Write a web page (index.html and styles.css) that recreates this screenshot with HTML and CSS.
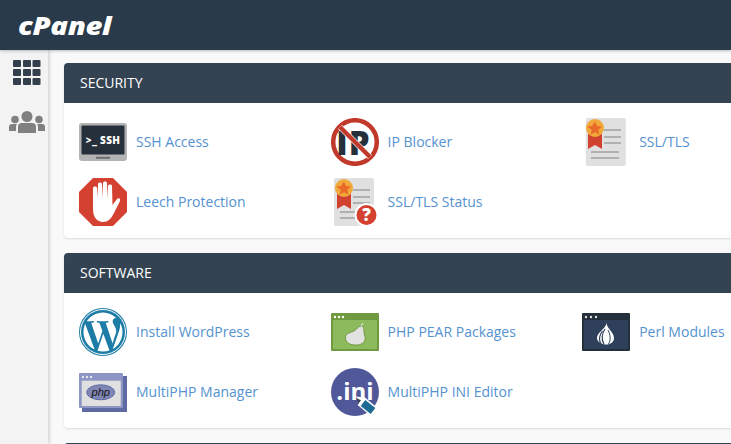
FILE: index.html
```html
<!DOCTYPE html>
<html lang="en">
<head>
    <meta charset="UTF-8">
    <title>cPanel</title>
    <link rel="stylesheet" href="styles.css">
</head>
<body>
    <header class="topbar">
        <span class="logo">cPanel</span>
    </header>
    <div class="layout">
        <nav class="sidebar">
            <a class="side-link" href="#">
                <svg width="28" height="26" viewBox="0 0 28 26" fill="#333f4c">
                    <rect x="0" y="0" width="8" height="7" rx="1"/><rect x="10" y="0" width="8" height="7" rx="1"/><rect x="19.500" y="0" width="8" height="7" rx="1"/>
                    <rect x="0" y="9" width="8" height="7" rx="1"/><rect x="10" y="9" width="8" height="7" rx="1"/><rect x="19.500" y="9" width="8" height="7" rx="1"/>
                    <rect x="0" y="18" width="8" height="7" rx="1"/><rect x="10" y="18" width="8" height="7" rx="1"/><rect x="19.500" y="18" width="8" height="7" rx="1"/>
                </svg>
            </a>
            <a class="side-link" href="#">
                <svg width="36" height="22" viewBox="0 0 36 22" fill="#808080">
                    <circle cx="18" cy="5.500" r="5.500"/>
                    <circle cx="6" cy="8.500" r="3.800"/>
                    <circle cx="30" cy="8.500" r="3.800"/>
                    <path d="M9 22v-6q0-4 4-4h10q4 0 4 4v6z"/>
                    <path d="M0 20v-4q0-3 3-3h5q-1 1-1 3v4z"/>
                    <path d="M36 20v-4q0-3-3-3h-5q1 1 1 3v4z"/>
                </svg>
            </a>
        </nav>
        <main class="content">
            <section class="panel">
                <h2 class="panel-head">SECURITY</h2>
                <div class="panel-body">
                    <a class="item" href="#">
                        <svg class="icon" viewBox="0 0 48 48">
                            <rect x="0" y="5" width="48" height="38" rx="3" fill="#b3b3b3"/>
                            <rect x="2.500" y="7.500" width="43" height="29" rx="1" fill="#25303b"/>
                            <rect x="17" y="38.800" width="14" height="2" fill="#6e6e6e"/>
                            <text x="24" y="26" class="ssh-text">&gt;_ SSH</text>
                        </svg>
                        <span>SSH Access</span>
                    </a>
                    <a class="item" href="#">
                        <svg class="icon" viewBox="0 0 48 48">
                            <circle cx="24" cy="24" r="21.800" fill="#fff" stroke="#c0392b" stroke-width="4.500"/>
                            <text x="22.500" y="37" class="ip-text">IP</text>
                            <path d="M9 9L39 39" stroke="#fff" stroke-width="5.500"/>
                            <path d="M9 9L39 39" stroke="#c0392b" stroke-width="4.500"/>
                        </svg>
                        <span>IP Blocker</span>
                    </a>
                    <a class="item" href="#">
                        <svg class="icon" viewBox="0 0 48 48">
                            <rect x="3.800" y="0" width="40" height="48" rx="2" fill="#e0e0e0"/>
                            <g fill="#b0b0b0">
                                <rect x="22" y="11" width="17" height="2"/><rect x="22" y="18" width="17" height="2"/><rect x="22" y="24" width="17" height="2"/>
                                <rect x="9" y="33" width="28" height="2"/><rect x="9" y="39" width="28" height="2"/>
                            </g>
                            <path d="M6 16H20V31L13 27L6 31z" fill="#d0412f"/>
                            <circle cx="13" cy="10" r="9" fill="#f2a93b"/>
                            <path d="M13 3.500l2 4.500 5 .5-3.700 3.300 1 4.900-4.300-2.500-4.300 2.500 1-4.900L5 8.500l5-.5z" fill="#ea6a2a"/>
                        </svg>
                        <span>SSL/TLS</span>
                    </a>
                    <a class="item" href="#">
                        <svg class="icon" viewBox="0 0 48 48">
                            <path d="M14 0H34L48 14V34L34 48H14L0 34V14z" fill="#d44130"/>
                            <path d="M14 31C14 26 14 14 14 10C14 8 18 8 18 10L18.500 20L19 6C19 4 23 4 23 6L23.500 20L24 5C24 3 28 3 28 5L28.500 21L29 8C29 6 33 6 33 8L33.500 27L38 21C40 19 42 21 41 23L35 35C32 41 29 44 24 44C18 44 14 39 14 31z" fill="#fff"/>
                        </svg>
                        <span>Leech Protection</span>
                    </a>
                    <a class="item" href="#">
                        <svg class="icon" viewBox="0 0 48 48">
                            <rect x="3" y="0" width="40" height="48" rx="2" fill="#e0e0e0"/>
                            <g fill="#b0b0b0">
                                <rect x="22" y="11" width="17" height="2"/><rect x="22" y="18" width="17" height="2"/><rect x="22" y="24" width="17" height="2"/>
                                <rect x="9" y="33" width="20" height="2"/><rect x="9" y="39" width="20" height="2"/>
                            </g>
                            <path d="M6 16H20V31L13 27L6 31z" fill="#d0412f"/>
                            <circle cx="13" cy="10" r="9" fill="#f2a93b"/>
                            <path d="M13 3.500l2 4.500 5 .5-3.700 3.300 1 4.900-4.300-2.500-4.300 2.500 1-4.900L5 8.500l5-.5z" fill="#ea6a2a"/>
                            <circle cx="35.500" cy="37" r="11" fill="#d44130" stroke="#fff" stroke-width="2"/>
                            <text x="35.500" y="43" class="q-text">?</text>
                        </svg>
                        <span>SSL/TLS Status</span>
                    </a>
                </div>
            </section>
            <section class="panel">
                <h2 class="panel-head">SOFTWARE</h2>
                <div class="panel-body">
                    <a class="item" href="#">
                        <svg class="icon" viewBox="0 0 48 48">
                            <circle cx="24" cy="24" r="24" fill="#1d7ca6"/>
                            <circle cx="24" cy="24" r="22.500" fill="none" stroke="#fff" stroke-width="1"/>
                            <path d="M4.500 24C4.500 31.800 9 38.500 15.600 41.600L6.200 16C5.100 18.400 4.500 21.100 4.500 24z" fill="#fff"/>
                            <path d="M37.200 23.200C37.200 20.800 36.300 19.100 35.600 17.900C34.600 16.300 33.700 15 33.700 13.400C33.700 11.600 35 10 36.900 10H37.200C33.700 6.800 29.100 4.500 24 4.500C17.200 4.500 11.200 8 7.700 13.300H9C11 13.300 14.200 13 14.200 13C15.300 13 15.400 14.500 14.400 14.600C14.400 14.600 13.400 14.700 12.200 14.800L19.200 35.500L23.400 22.900L20.400 14.800C19.400 14.700 18.400 14.600 18.400 14.600C17.400 14.500 17.500 13 18.500 13C18.500 13 21.700 13.300 23.600 13.300C25.600 13.300 28.800 13 28.800 13C29.800 13 29.900 14.500 28.900 14.600C28.900 14.600 27.900 14.700 26.700 14.800L33.600 35.400L35.500 29C36.500 26.600 37.200 24.800 37.200 23.200z" fill="#fff"/>
                            <path d="M24.300 25.800L18.500 42.700C20.200 43.200 22.100 43.500 24 43.500C26.300 43.500 28.400 43.100 30.400 42.400L30.300 42.100z" fill="#fff"/>
                            <path d="M41 15.100C41.100 15.700 41.100 16.400 41.100 17.100C41.100 19.100 40.700 21.300 39.700 24.100L33.800 41.100C39.600 37.800 43.500 31.300 43.500 24C43.500 20.800 42.500 17.700 41 15.100z" fill="#fff"/>
                        </svg>
                        <span>Install WordPress</span>
                    </a>
                    <a class="item" href="#">
                        <svg class="icon" viewBox="0 0 48 48">
                            <rect x="0" y="5" width="48" height="38" rx="1" fill="#6f9a3f"/>
                            <rect x="2" y="12" width="44" height="29" fill="#8dba5c"/>
                            <circle cx="4" cy="9" r="1.200" fill="#fff"/><circle cx="8" cy="9" r="1.200" fill="#fff"/><circle cx="12" cy="9" r="1.200" fill="#fff"/>
                            <path d="M30 18C33 18 33 21 33 24C33 27 35 29 34 32C32.500 36 28 37.500 23 37C17 36.500 14 33 14.500 29C15 25 20 24.500 23 23C26 21.500 27 18 30 18z" fill="#e2e2e2" stroke="#6f9a3f" stroke-width="1"/>
                            <path d="M30 18L32 15" stroke="#e2e2e2" stroke-width="1.200"/>
                        </svg>
                        <span>PHP PEAR Packages</span>
                    </a>
                    <a class="item" href="#">
                        <svg class="icon" viewBox="0 0 48 48">
                            <rect x="0" y="5" width="48" height="38" rx="1" fill="#232f3b"/>
                            <rect x="2" y="12" width="44" height="29" fill="#2f405a"/>
                            <circle cx="4" cy="9" r="1.200" fill="#e0e0e0"/><circle cx="9" cy="9" r="1.200" fill="#e0e0e0"/><circle cx="14" cy="9" r="1.200" fill="#e0e0e0"/>
                            <path d="M24.500 15C25 21 32 24 32 30C32 34 28.500 36.500 24.500 36.500C20.500 36.500 15 34 15 30C15 24 24 21 24.500 15z" fill="#fff"/>
                            <path d="M23 21C20 25 19 32 22 36M20.500 23C17.500 27 16.500 31 18.500 35" fill="none" stroke="#2f405a" stroke-width="1.200"/>
                            <path d="M26 22C28.500 27 29 32 26.500 36" fill="none" stroke="#2f405a" stroke-width="1"/>
                        </svg>
                        <span>Perl Modules</span>
                    </a>
                    <a class="item" href="#">
                        <svg class="icon" viewBox="0 0 48 48">
                            <rect x="3" y="8" width="45" height="36" fill="#5d6aa3"/>
                            <rect x="0" y="5" width="44" height="35" rx="1" fill="#8d95c4"/>
                            <rect x="2.700" y="12.700" width="39" height="25.300" fill="#e0e0e0"/>
                            <circle cx="4" cy="9" r="1.200" fill="#e8e8e8"/><circle cx="8" cy="9" r="1.200" fill="#e8e8e8"/><circle cx="12" cy="9" r="1.200" fill="#e8e8e8"/>
                            <ellipse cx="21.700" cy="24.300" rx="14" ry="7.500" fill="#8187b5" stroke="#5d6aa3" stroke-width="1"/>
                            <text x="21.700" y="28" class="php-text">php</text>
                        </svg>
                        <span>MultiPHP Manager</span>
                    </a>
                    <a class="item" href="#">
                        <svg class="icon" viewBox="0 0 48 48">
                            <circle cx="24" cy="24" r="24" fill="#50589a"/>
                            <text x="24" y="32" class="ini-text">.ini</text>
                            <path d="M30 33L42 43" stroke="#fff" stroke-width="10.500"/>
                            <path d="M25 28.500L33 29.500L29 36z" fill="#fff"/>
                            <path d="M32 35L42 43" stroke="#1d6a93" stroke-width="7.500"/>
                            <path d="M25.700 30L30 32.500L27.500 35z" fill="#2b3a46"/>
                        </svg>
                        <span>MultiPHP INI Editor</span>
                    </a>
                </div>
            </section>
            <section class="panel">
                <div class="panel-head"></div>
            </section>
        </main>
    </div>
</body>
</html>
```

FILE: styles.css
```css
/* Basic Reset */
* {
    margin: 0;
    padding: 0;
    box-sizing: border-box;
}

html, body {
    height: 100%;
    overflow: hidden;
}

body {
    font-family: 'Open Sans', sans-serif;
    background-color: #f9f9f9;
}

.topbar {
    height: 50px;
    background-color: #293a4a;
    padding-left: 18px;
    display: flex;
    align-items: center;
    box-shadow: 0 1px 3px rgba(0, 0, 0, 0.25);
    position: relative;
    z-index: 2;
}

.logo {
    font-family: 'Open Sans', sans-serif;
    font-size: 24px;
    font-weight: 800;
    font-style: italic;
    letter-spacing: -0.3px;
    color: #ffffff;
    transform: scaleX(1.22);
    transform-origin: left center;
}

.layout {
    display: flex;
    height: 394px;
}

.sidebar {
    width: 48px;
    background-color: #f3f3f3;
    box-shadow: 1px 0 4px rgba(0, 0, 0, 0.2);
    display: flex;
    flex-direction: column;
    align-items: center;
    padding: 10px 0 0 5px;
    gap: 25px;
    flex-shrink: 0;
}

.side-link {
    display: block;
    height: 26px;
}

.content {
    padding: 13px 0 0 16px;
    flex: 1;
    min-width: 0;
    overflow: hidden;
}

.panel {
    background-color: #ffffff;
    border-radius: 4px 0 0 4px;
    box-shadow: 0 1px 2px rgba(0, 0, 0, 0.12);
    margin-bottom: 15px;
}

.panel-head {
    height: 40px;
    background-color: #344352;
    border-radius: 4px 0 0 0;
    color: #ffffff;
    font-size: 14px;
    font-weight: 400;
    line-height: 40px;
    padding-left: 16px;
}

.panel-body {
    display: grid;
    grid-template-columns: 251.6px 251.6px 251.6px;
    grid-auto-rows: 48px;
    row-gap: 12px;
    padding: 15px 0 12px 15px;
}

.item {
    display: flex;
    align-items: center;
    gap: 9px;
    color: #5592d0;
    text-decoration: none;
    font-size: 14px;
    white-space: nowrap;
}

.item span {
    padding-bottom: 2px;
}

.icon {
    width: 48px;
    height: 48px;
    flex-shrink: 0;
}

.ssh-text {
    font-family: 'Open Sans', sans-serif;
    font-size: 10px;
    font-weight: 800;
    letter-spacing: 0.3px;
    fill: #ffffff;
    text-anchor: middle;
}

.ip-text {
    font-family: 'Open Sans', sans-serif;
    font-size: 33px;
    font-weight: 800;
    letter-spacing: 1px;
    fill: #25303b;
    text-anchor: middle;
}

.q-text {
    font-family: 'Open Sans', sans-serif;
    font-size: 17px;
    font-weight: 800;
    fill: #ffffff;
    text-anchor: middle;
}

.php-text {
    font-family: 'Liberation Sans', sans-serif;
    font-size: 11px;
    font-style: italic;
    fill: #111111;
    text-anchor: middle;
}

.ini-text {
    font-family: 'Open Sans', sans-serif;
    font-size: 24px;
    font-weight: 700;
    fill: #ffffff;
    text-anchor: middle;
}
```
